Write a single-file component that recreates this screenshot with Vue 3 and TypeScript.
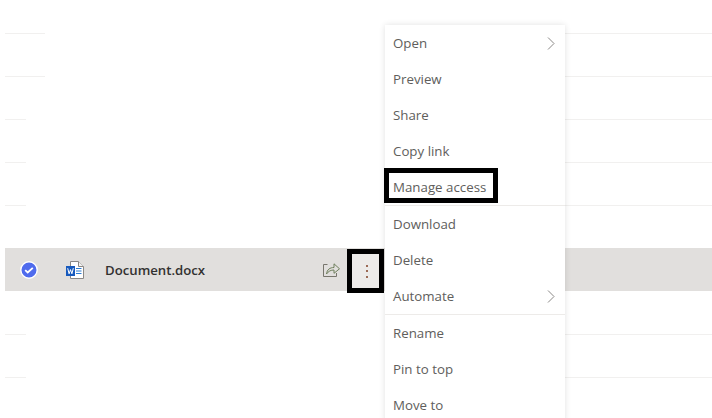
<script setup lang="ts">
interface Line { kind: 'wide' | 'short' }
interface MenuItem { label: string; sub?: boolean; divider?: boolean; boxed?: boolean }

const topLines: Line[] = [
  { kind: 'wide' },
  { kind: 'wide' },
  { kind: 'short' },
  { kind: 'short' },
  { kind: 'short' }
]
const bottomLines: Line[] = [{ kind: 'short' }, { kind: 'short' }]
const items: MenuItem[] = [
  { label: 'Open', sub: true },
  { label: 'Preview' },
  { label: 'Share' },
  { label: 'Copy link' },
  { label: 'Manage access', divider: true, boxed: true },
  { label: 'Download' },
  { label: 'Delete' },
  { label: 'Automate', sub: true, divider: true },
  { label: 'Rename' },
  { label: 'Pin to top' },
  { label: 'Move to' }
]
</script>

<template>
  <div class="page">
    <div class="list">
      <div v-for="(l, i) in topLines" :key="'t' + i" class="row">
        <div class="rule">
          <span class="rule-left" :class="{ wide: l.kind === 'wide' }"></span>
          <span class="rule-right"></span>
        </div>
      </div>
      <div class="row spacer"></div>
      <div class="row selected">
        <span class="check">
          <svg width="18" height="18" viewBox="0 0 18 18">
            <circle cx="9" cy="9" r="8.2" fill="#4f6bed" stroke="#fff" stroke-width="1.4" />
            <path d="M5.2 9.2 7.7 11.5 12.8 6.8" fill="none" stroke="#fff" stroke-width="1.8" />
          </svg>
        </span>
        <span class="doc">
          <svg width="18" height="18" viewBox="0 0 18 18">
            <path d="M4.5.5h8l5 5v12h-13z" fill="#fff" stroke="#8a8886" stroke-width="1" />
            <path d="M12.5.5v5h5" fill="#f3f2f1" stroke="#8a8886" stroke-width="1" />
            <path d="M10 7.5h5.500M10 10h5.500M10 12.500h5.500" stroke="#2b7cd3" stroke-width="1.2" />
            <rect x="0" y="5" width="9" height="10" fill="#185abd" />
            <path d="M1.7 7.200 3.100 12.800 4.500 8.600 5.900 12.800 7.300 7.200" fill="none" stroke="#fff" stroke-width="1" />
          </svg>
        </span>
        <span class="name">Document.docx</span>
        <span class="share">
          <svg width="17" height="16" viewBox="0 0 17 16">
            <path d="M4.5 2.500H.5v12h13v-3.500" fill="none" stroke="#77756c" stroke-width="1" />
            <path d="M3.500 12c.5-4.500 3.500-6.500 7.500-6.500V1.800l5.500 5-5.500 4.500V8c-3 0-5.500 1-7.500 4z" fill="none" stroke="#6f7f5c" stroke-width="1" />
          </svg>
        </span>
        <span class="more-box">
          <span class="more">
            <i></i><i></i><i></i>
          </span>
        </span>
      </div>
      <div v-for="(l, i) in bottomLines" :key="'b' + i" class="row after">
        <div class="rule">
          <span class="rule-left"></span>
          <span class="rule-right"></span>
        </div>
      </div>
    </div>

    <ul class="menu">
      <li v-for="item in items" :key="item.label" class="item" :class="{ divider: item.divider, boxed: item.boxed }">
        <span class="label">{{ item.label }}</span>
        <svg v-if="item.sub" class="chev" width="8" height="13" viewBox="0 0 8 13">
          <path d="M1 .5 7 6.500 1 12.500" fill="none" stroke="#8a8886" stroke-width="1" />
        </svg>
      </li>
    </ul>
  </div>
</template>

<style>
html, body { margin: 0; background: #fff; }
</style>

<style scoped>
.page {
  position: relative;
  width: 712px;
  height: 418px;
  overflow: hidden;
  background: #fff;
  font-family: "Open Sans", "Noto Sans", sans-serif;
}
.list {
  display: flex;
  flex-direction: column;
  padding-left: 5px;
}
.row {
  height: 43px;
  flex: none;
  display: flex;
  align-items: flex-end;
}
.row:first-child { height: 34px; }
.selected + .row { height: 44px; }
.rule {
  width: 100%;
  display: flex;
  justify-content: space-between;
}
.rule-left {
  width: 21px;
  height: 1px;
  background: #f1f0ef;
}
.rule-left.wide { width: 40px; }
.rule-right {
  width: 327px;
  height: 1px;
  background: #f1f0ef;
}
.spacer { height: 42px; }
.selected {
  position: relative;
  align-items: center;
  background: #e1dfdd;
}
.check {
  display: flex;
  margin-left: 15px;
}
.doc {
  display: flex;
  margin-left: 28px;
}
.name {
  margin-left: 21px;
  font-size: 13.2px;
  font-weight: 600;
  color: #323130;
}
.share {
  display: flex;
  position: absolute;
  left: 318px;
  top: 14px;
}
.more-box {
  position: absolute;
  left: 342px;
  top: 1px;
  width: 37px;
  height: 44px;
  box-sizing: border-box;
  border: 5px solid #000;
  background: #edebe9;
  display: flex;
  align-items: center;
  justify-content: center;
}
.more {
  display: flex;
  flex-direction: column;
  gap: 3.5px;
  margin-left: 3px;
}
.more i {
  width: 2px;
  height: 2px;
  background: #9c6a55;
}
.menu {
  position: absolute;
  left: 385px;
  top: 25px;
  width: 180px;
  margin: 0;
  padding: 0;
  list-style: none;
  background: #fff;
  box-shadow: 0 0 6px rgba(0, 0, 0, 0.12);
}
.item {
  position: relative;
  height: 36px;
  display: flex;
  align-items: center;
  justify-content: space-between;
  padding: 0 10px 0 8px;
  font-size: 13.3px;
  color: #605e5c;
}
.item.divider {
  height: 37px;
  border-bottom: 1px solid #edebe9;
  box-sizing: border-box;
}
.item.boxed::after {
  content: "";
  position: absolute;
  left: -1px;
  top: -1px;
  width: 114px;
  height: 35px;
  box-sizing: border-box;
  border: 5px solid #000;
}
</style>
